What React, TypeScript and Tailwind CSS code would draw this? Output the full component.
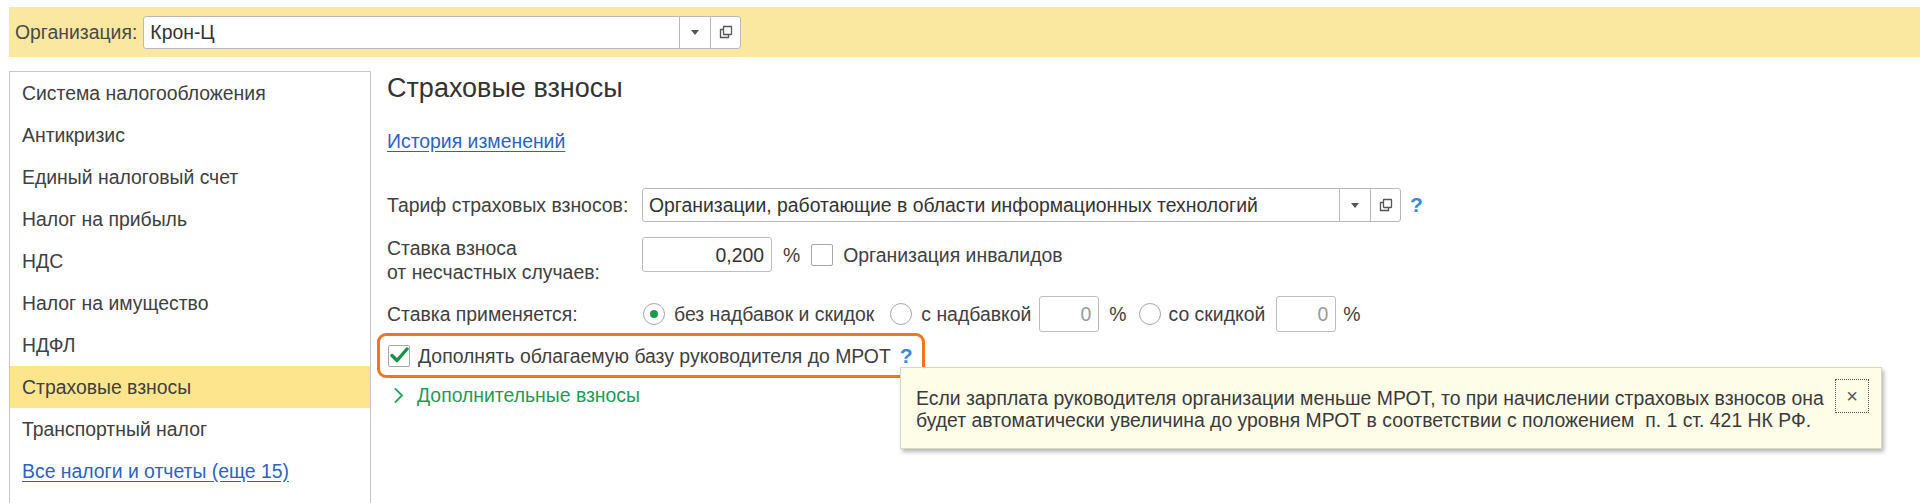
import React from "react";

const CopyIcon = () => (
  <svg width="14" height="14" viewBox="0 0 14 14" fill="none" stroke="#555" strokeWidth="1.3">
    <rect x="4.5" y="1.5" width="8" height="8" rx="0.5" fill="white" />
    <path d="M4.5 4.5 H1.5 V12.5 H9.5 V9.5" />
  </svg>
);

const DropArrow = () => (
  <svg width="8" height="5" viewBox="0 0 8 5">
    <path d="M0 0 H8 L4 5 Z" fill="#555" />
  </svg>
);

const Help = ({ dotted }: { dotted?: boolean }) => (
  <span
    className={
      "text-[#3a8ad6] font-bold text-[21px] leading-[21px] " +
      (dotted ? "border-b-2 border-dotted border-[#3a8ad6]" : "")
    }
  >
    ?
  </span>
);

function ComboField({ text, width, height }: { text: string; width: string; height: string }) {
  return (
    <div className={`flex ${width} ${height} border border-[#b9b9b9] rounded-[3px] bg-white`}>
      <div className="flex-1 flex items-center pl-[6px] text-[#333] overflow-hidden whitespace-nowrap">{text}</div>
      <div className="w-[31px] border-l border-[#b9b9b9] flex items-center justify-center">
        <DropArrow />
      </div>
      <div className="w-[30px] border-l border-[#b9b9b9] flex items-center justify-center">
        <CopyIcon />
      </div>
    </div>
  );
}

const Radio = ({ checked }: { checked?: boolean }) => (
  <span className="w-[22px] h-[22px] rounded-full border border-[#a8a8a8] bg-white flex items-center justify-center shrink-0">
    {checked && <span className="w-[8px] h-[8px] rounded-full bg-[#1a9a4c]" />}
  </span>
);

const SmallNum = ({ w, h, value, gray }: { w: string; h: string; value: string; gray?: boolean }) => (
  <div
    className={`${w} ${h} border border-[#bdbdbd] rounded-[3px] bg-white flex items-center justify-end pr-[7px] ${
      gray ? "text-[#9a9a9a]" : "text-[#333]"
    }`}
  >
    {value}
  </div>
);

const items = [
  "Система налогообложения",
  "Антикризис",
  "Единый налоговый счет",
  "Налог на прибыль",
  "НДС",
  "Налог на имущество",
  "НДФЛ",
  "Страховые взносы",
  "Транспортный налог",
];

export default function App() {
  return (
    <div className="w-[1920px] h-[503px] bg-white overflow-hidden relative font-['Liberation_Sans',Arial,sans-serif] text-[#404040] text-[19.4px] leading-[24px]">
      {/* top bar */}
      <div className="pt-[7px] pl-[9px]">
        <div className="h-[50px] bg-[#fbe8a0] flex items-center pl-[6px]">
          <span className="text-[#4a4a4a]">Организация:</span>
          <div className="ml-[6px]">
            <ComboField text="Крон-Ц" width="w-[598px]" height="h-[33px]" />
          </div>
        </div>
      </div>

      <div className="flex pl-[9px] pt-[14px]">
        {/* sidebar */}
        <div className="w-[362px] h-[460px] border border-[#c8c8c8] shrink-0">
          {items.map((it) => (
            <div
              key={it}
              className={
                "h-[42px] flex items-center pl-[12px] whitespace-nowrap " +
                (it === "Страховые взносы" ? "bg-[#fde58e]" : "")
              }
            >
              {it}
            </div>
          ))}
          <div className="h-[42px] flex items-center pl-[12px]">
            <span className="text-[#2e62bf] underline underline-offset-[3px]">Все налоги и отчеты (еще 15)</span>
          </div>
        </div>

        {/* content */}
        <div className="pl-[16px] pt-[1px] flex-1">
          <div className="text-[27px] leading-[32px] text-[#333]">Страховые взносы</div>
          <div className="mt-[25px]">
            <span className="text-[#2e62bf] underline underline-offset-[3px]">История изменений</span>
          </div>

          {/* Тариф */}
          <div className="mt-[35px] flex items-center h-[34px]">
            <div className="w-[255px] shrink-0">Тариф страховых взносов:</div>
            <ComboField
              text="Организации, работающие в области информационных технологий"
              width="w-[759px]"
              height="h-[34px]"
            />
            <span className="ml-[9px]">
              <Help />
            </span>
          </div>

          {/* Ставка взноса */}
          <div className="mt-[14px] flex items-start">
            <div className="w-[255px] shrink-0 leading-[24px]">
              Ставка взноса
              <br />
              от несчастных случаев:
            </div>
            <div className="mt-[1px] flex items-center">
              <SmallNum w="w-[130px]" h="h-[35px]" value="0,200" />
              <span className="ml-[11px]">%</span>
              <span className="ml-[11px] w-[22px] h-[22px] border border-[#a8a8a8] rounded-[2px] bg-white" />
              <span className="ml-[10px]">Организация инвалидов</span>
            </div>
          </div>

          {/* Ставка применяется */}
          <div className="mt-[12px] flex items-center h-[36px]">
            <div className="w-[256px] shrink-0">Ставка применяется:</div>
            <Radio checked />
            <span className="ml-[9px]">без надбавок и скидок</span>
            <span className="ml-[16px]">
              <Radio />
            </span>
            <span className="ml-[9px]">с надбавкой</span>
            <span className="ml-[8px]">
              <SmallNum w="w-[60px]" h="h-[36px]" value="0" gray />
            </span>
            <span className="ml-[10px]">%</span>
            <span className="ml-[12px]">
              <Radio />
            </span>
            <span className="ml-[8px]">со скидкой</span>
            <span className="ml-[11px]">
              <SmallNum w="w-[60px]" h="h-[36px]" value="0" gray />
            </span>
            <span className="ml-[7px]">%</span>
          </div>

          {/* highlighted checkbox */}
          <div className="mt-[1px] -ml-[10px] w-[548px] h-[45px] border-[3px] border-[#f5741c] rounded-[9px] flex items-center pl-[8px]">
            <span className="w-[22px] h-[22px] border border-[#a8a8a8] rounded-[2px] bg-white flex items-center justify-center shrink-0">
              <svg width="19" height="17" viewBox="0 0 19 17">
                <path d="M2 8.5 L7 13.5 L17 2" fill="none" stroke="#159447" strokeWidth="3.4" strokeLinecap="round" strokeLinejoin="round" />
              </svg>
            </span>
            <span className="ml-[8px] whitespace-nowrap">Дополнять облагаемую базу руководителя до МРОТ</span>
            <span className="ml-[9px]">
              <Help dotted />
            </span>
          </div>

          {/* Дополнительные взносы */}
          <div className="mt-[5px] flex items-center h-[24px] ml-[6px]">
            <svg width="11" height="17" viewBox="0 0 11 17">
              <path d="M2 1.5 L9 8.5 L2 15.5" fill="none" stroke="#27a35c" strokeWidth="1.8" />
            </svg>
            <span className="ml-[13px] text-[#1f9a55]">Дополнительные взносы</span>
          </div>
        </div>
      </div>

      {/* tooltip */}
      <div className="absolute left-[900px] top-[367px] w-[982px] h-[82px] bg-[#fefde8] border border-[#d9d8c4] shadow-[2px_3px_4px_rgba(0,0,0,0.28)] flex">
        <div className="pl-[15px] pt-[19px] leading-[22px] text-[#3a3a3a] flex-1 whitespace-nowrap">
          Если зарплата руководителя организации меньше МРОТ, то при начислении страховых взносов она
          <br />
          будет автоматически увеличина до уровня МРОТ в соответствии с положением&nbsp; п. 1 ст. 421 НК РФ.
        </div>
        <div className="mt-[11px] mr-[12px] w-[34px] h-[34px] border border-dotted border-[#555] flex items-center justify-center text-[#555] text-[20px]">
          ×
        </div>
      </div>
    </div>
  );
}
